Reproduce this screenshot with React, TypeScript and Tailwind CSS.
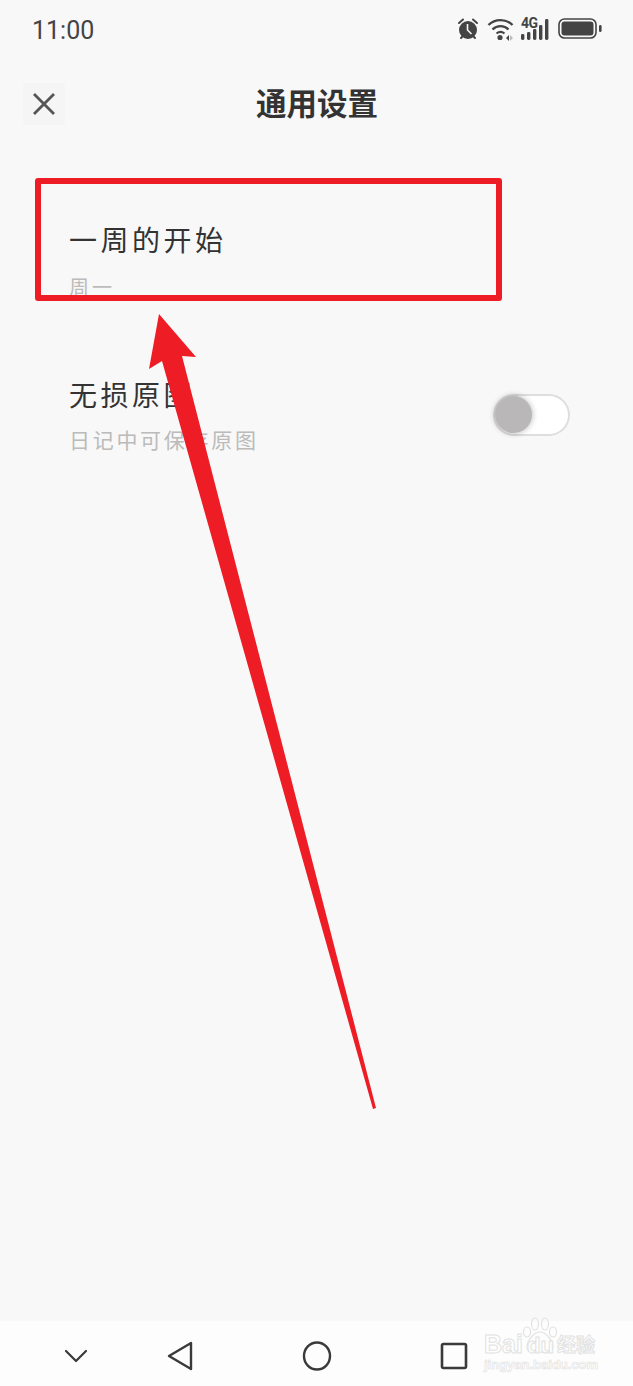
export default function App() {
  return (
    <div className="relative flex h-[1386px] w-[633px] flex-col overflow-hidden bg-[#f8f8f8] font-['Roboto','Noto_Sans_CJK_SC',sans-serif]">
      {/* status bar */}
      <div className="flex h-[60px] items-center justify-between pl-[32px] pr-[31px] text-[#444444]">
        <span className="text-[25px] leading-none font-['Roboto',sans-serif]">11:00</span>
        <div className="mb-[2px] flex items-center gap-[7px]">
          <svg width="24" height="24" viewBox="0 0 24 24">
            <circle cx="12" cy="13" r="9" fill="#444" />
            <path d="M3 6 L7 2.5 M21 6 L17 2.5" stroke="#444" strokeWidth="2" strokeLinecap="round" />
            <path d="M5 21 L7 19 M19 21 L17 19" stroke="#444" strokeWidth="2" strokeLinecap="round" />
            <path d="M11.5 7 V13 L15.5 17" stroke="#f8f8f8" strokeWidth="1.6" fill="none" />
          </svg>
          <svg width="27" height="24" viewBox="0 0 27 24" fill="none">
            <path d="M1.5 8 C8 1.5 19 1.5 25.5 8" stroke="#444" strokeWidth="2.4" />
            <path d="M5.5 12.5 C10 8 17 8 21.5 12.5" stroke="#444" strokeWidth="2.4" />
            <path d="M9.5 16.5 C12 14.5 15 14.5 17.5 16.5" stroke="#444" strokeWidth="2.2" />
            <circle cx="13" cy="20.5" r="2.6" fill="#444" />
            <path d="M19 21 L22 18 V24 Z" fill="#444" />
            <path d="M23 18 L26 21 L23 24 Z" fill="#bbb" />
          </svg>
          <div className="relative h-[24px] w-[30px]">
            <span className="absolute left-0 top-[-1px] text-[14px] font-bold leading-[14px] tracking-[-0.5px] text-[#444] font-['Roboto',sans-serif]">4G</span>
            <svg className="absolute inset-0" width="30" height="24" viewBox="0 0 30 24" fill="#444">
              <rect x="0" y="17" width="3.4" height="6" rx="1.4" />
              <rect x="6" y="15" width="3.4" height="8" rx="1.4" />
              <rect x="12" y="12" width="3.4" height="11" rx="1.4" />
              <rect x="18" y="8" width="3.4" height="15" rx="1.4" />
              <rect x="24" y="2" width="3.4" height="21" rx="1.4" />
            </svg>
          </div>
          <svg width="44" height="24" viewBox="0 0 44 24" fill="none">
            <rect x="1" y="2" width="37" height="19" rx="5.5" stroke="#444" strokeWidth="1.6" />
            <rect x="3.5" y="4.5" width="32" height="14" rx="3" fill="#444" />
            <rect x="41" y="8" width="2.6" height="7" rx="1.3" fill="#444" />
          </svg>
        </div>
      </div>

      {/* header */}
      <div className="relative mt-[23px] flex h-[42px] items-center justify-center">
        <div className="absolute left-[23px] top-0 flex h-[42px] w-[42px] items-center justify-center bg-[#f5f5f5]">
          <svg width="24" height="24" viewBox="0 0 24 24" fill="none" stroke="#555" strokeWidth="2.8">
            <path d="M2 2 L22 22 M22 2 L2 22" />
          </svg>
        </div>
        <h1 className="ml-[1px] mt-[3px] text-[30.5px] font-bold leading-none text-[#333333]">通用设置</h1>
      </div>

      {/* settings list */}
      <div className="flex flex-1 flex-col pl-[69px] pr-[63px]">
        <div className="mt-[101px] flex flex-col">
          <span className="text-[28px] leading-[32px] tracking-[3.5px] text-[#333333]">一周的开始</span>
          <span className="mt-[18px] text-[20px] leading-[24px] tracking-[3px] text-[#bbbbbb]">周一</span>
        </div>
        <div className="mt-[81px] flex items-center justify-between">
          <div className="flex flex-col">
            <span className="text-[28px] leading-[32px] tracking-[3.5px] text-[#333333]">无损原图</span>
            <span className="mt-[16px] text-[21px] leading-[24px] tracking-[2.7px] text-[#bbbbbb]">日记中可保存原图</span>
          </div>
          <div className="ml-[1px] mb-[5px] flex h-[42px] w-[77px] items-center rounded-full border-2 border-[#dedede] bg-white">
            <div className="h-[37px] w-[37px] rounded-full bg-[#b9b7b8] shadow-[0_0_6px_rgba(0,0,0,0.3)]" />
          </div>
        </div>
      </div>

      {/* nav bar */}
      <div className="relative flex h-[65px] items-center bg-[#fdfdfd]">
        <div className="mt-[5px] flex w-full items-center pl-[64px]">
          <svg width="24" height="14" viewBox="0 0 24 14" fill="none" stroke="#3a3a3a" strokeWidth="2.2" strokeLinecap="round" strokeLinejoin="round">
            <path d="M2 2 L12 12 L22 2" />
          </svg>
          <svg className="ml-[79px]" width="26" height="30" viewBox="0 0 26 30" fill="none" stroke="#3a3a3a" strokeWidth="2.4" strokeLinejoin="round">
            <path d="M24 2 V28 L2 15 Z" />
          </svg>
          <svg className="ml-[109px]" width="30" height="30" viewBox="0 0 30 30" fill="none" stroke="#3a3a3a" strokeWidth="2.4">
            <ellipse cx="15" cy="15" rx="13" ry="13.5" />
          </svg>
          <svg className="ml-[108px]" width="28" height="28" viewBox="0 0 28 28" fill="none" stroke="#3a3a3a" strokeWidth="2.6" strokeLinejoin="round">
            <rect x="2" y="2" width="24" height="24" rx="1.5" />
          </svg>
        </div>

        {/* watermark */}
        <div className="absolute left-[484px] top-0 h-[65px] w-[115px] font-['Liberation_Sans',sans-serif]">
          <svg className="absolute left-[38px] top-[-4px]" width="36" height="38" viewBox="0 0 36 38" fill="none" stroke="#e2e2e2" strokeWidth="1.2">
            <ellipse cx="5" cy="15" rx="3.5" ry="5" />
            <ellipse cx="13" cy="7" rx="3.5" ry="6" />
            <ellipse cx="23" cy="7" rx="3.5" ry="6" />
            <ellipse cx="31" cy="15" rx="3.5" ry="5" />
            <path d="M18 15 C24 15 31 24 31 30 C31 37 23 36 18 35 C13 36 5 37 5 30 C5 24 12 15 18 15 Z" />
          </svg>
          <span className="absolute left-0 top-[14px] text-[25px] font-bold leading-[18px] text-white [-webkit-text-stroke:1px_#e2e2e2]">Bai</span>
          <span className="absolute left-[43px] top-[18px] text-[22px] font-bold leading-[14px] text-white [-webkit-text-stroke:1px_#e2e2e2]">du</span>
          <span className="absolute left-[73px] top-[14px] text-[19px] font-bold leading-[18px] text-white [-webkit-text-stroke:1px_#e2e2e2] font-['Noto_Sans_CJK_SC',sans-serif]">经验</span>
          <span className="absolute left-0 top-[37px] text-[13px] font-bold leading-[14px] text-white [-webkit-text-stroke:0.7px_#e4e4e4]">jingyan.baidu.com</span>
        </div>
      </div>

      {/* annotation overlays */}
      <div className="absolute left-[35px] top-[178px] h-[123px] w-[467px] rounded-[3px] border-[6px] border-[#ee1c25]" />
      <svg className="absolute inset-0" width="633" height="1386" viewBox="0 0 633 1386">
        <path d="M159 314 L196 357 L182 356 L376 1108 L373 1109 L162 361 L149 369 Z" fill="#ee1c25" strokeLinejoin="round" />
      </svg>
    </div>
  );
}
